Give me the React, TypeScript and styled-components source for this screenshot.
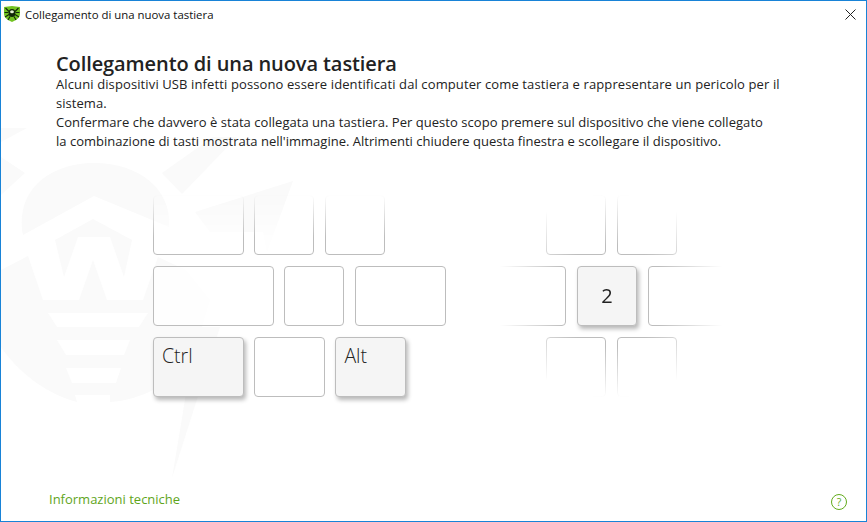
import React from "react";
import styled, { createGlobalStyle } from "styled-components";

const GlobalStyle = createGlobalStyle`
  html, body {
    margin: 0;
    padding: 0;
    background: #fff;
  }
`;

const Watermark = () => (
  <WatermarkSvg viewBox="0 0 867 522" aria-hidden="true">
    <path d="M23 235C15 190 50 163 94 163C140 163 172 190 169 227L94 196Z" />
    <path d="M55 240L93 219L132 240L124 277L110 237L78 237L64 277Z" />
    <path d="M93 260L79 300L107 300Z" />
    <path d="M1 270L28 256L43 300L143 300L158 257L186 270L210 300L195 350C175 385 140 400 110 402L110 395L75 395L77 402C50 395 20 375 1 347ZM48 313L57 327L139 327L148 313ZM57 340L66 355L124 355L130 340ZM66 368L72 383L116 383L121 368Z" fillRule="evenodd" />
    <path d="M1 157L25 173L1 195Z" />
    <path d="M1 128L27 128L1 142Z" />
    <path d="M162 173L213 137L237 137L182 194Z" />
    <path d="M195 212L293 181L267 252L263 232L210 232Z" />
    <path d="M197 327L220 327L172 478Z" />
  </WatermarkSvg>
);

const LogoIcon = () => (
  <svg width="16" height="16" viewBox="0 0 16 16">
    <path d="M0 1L8 0L16 1V8C16 11.5 12 14.5 8 16C4 14.5 0 11.5 0 8Z" fill="#72c322" />
    <g stroke="#12280a" strokeWidth="1.1" fill="none">
      <path d="M1.5 2L5 5.5M14.5 2L11 5.5M0.5 6.5H4.5M15.5 6.5H11.5M1 11L5 8.5M15 11L11 8.5M4 14L6 10.5M12 14L10 10.5" />
    </g>
    <ellipse cx="8" cy="7" rx="3.4" ry="4" fill="#12280a" />
    <ellipse cx="8" cy="5.8" rx="1.9" ry="1.5" fill="#e6f4d4" />
  </svg>
);

const Key = ({ width, pressed, label, center }: KeyProps) => (
  <KeyCap $width={width} $pressed={pressed} $center={center}>
    {label}
  </KeyCap>
);

const App = () => {
  return (
    <Window>
      <GlobalStyle />
      <Watermark />
      <TitleBar>
        <LogoIcon />
        <WindowTitle>Collegamento di una nuova tastiera</WindowTitle>
        <CloseIcon viewBox="0 0 11 11">
          <path d="M0.5 0.5L10.5 10.5M10.5 0.5L0.5 10.5" />
        </CloseIcon>
      </TitleBar>
      <Content>
        <Heading>Collegamento di una nuova tastiera</Heading>
        <Description>
          <Line $spacing={0.115}>
            Alcuni dispositivi USB infetti possono essere identificati dal computer come tastiera e rappresentare un pericolo per il
          </Line>
          <Line $spacing={0.05}>sistema.</Line>
          <Line $spacing={0.04}>
            Confermare che davvero è stata collegata una tastiera. Per questo scopo premere sul dispositivo che viene collegato
          </Line>
          <Line $spacing={0.01}>
            la combinazione di tasti mostrata nell'immagine. Altrimenti chiudere questa finestra e scollegare il dispositivo.
          </Line>
        </Description>
      </Content>
      <Keyboard>
        <LeftCluster>
          <FadedRow>
            <Key width={91} />
            <Key width={60} />
            <Key width={60} />
          </FadedRow>
          <KeyRow>
            <Key width={121} />
            <Key width={60} />
            <Key width={91} />
          </KeyRow>
          <KeyRow>
            <Key width={91} label="Ctrl" pressed />
            <Key width={70.6} />
            <Key width={70.6} label="Alt" pressed />
          </KeyRow>
        </LeftCluster>
        <RightCluster>
          <ShortRow>
            <Key width={60} />
            <Key width={60} />
          </ShortRow>
          <WideRow>
            <Key width={80} />
            <Key width={60} label="2" pressed center />
            <Key width={88} />
          </WideRow>
          <ShortRow>
            <Key width={60} />
            <Key width={60} />
          </ShortRow>
        </RightCluster>
      </Keyboard>
      <Footer>
        <TechLink>Informazioni tecniche</TechLink>
        <HelpIcon>?</HelpIcon>
      </Footer>
    </Window>
  );
};

interface KeyProps {
  width: number;
  pressed?: boolean;
  label?: string;
  center?: boolean;
}

const Window = styled.div`
  position: relative;
  box-sizing: border-box;
  width: 867px;
  height: 522px;
  border: 1px solid #1883d7;
  background: #fff;
  display: flex;
  flex-direction: column;
  overflow: hidden;
  font-family: "Open Sans", "Noto Sans", sans-serif;
  color: #222;
`;

const WatermarkSvg = styled.svg`
  position: absolute;
  left: -1px;
  top: -1px;
  width: 867px;
  height: 522px;
  fill: #fafafa;
`;

const TitleBar = styled.div`
  position: relative;
  display: flex;
  align-items: center;
  height: 26px;
  padding: 0 10px 0 3px;
  box-sizing: border-box;
`;

const WindowTitle = styled.span`
  margin-left: 5px;
  font-size: 11.4px;
  color: #111;
  flex: 1;
`;

const CloseIcon = styled.svg`
  width: 11px;
  height: 11px;
  stroke: #222;
  stroke-width: 1;
  fill: none;
`;

const Content = styled.div`
  position: relative;
  padding: 26px 0 0 55px;
`;

const Heading = styled.h1`
  margin: 0;
  font-size: 20px;
  line-height: 22px;
  font-weight: 600;
  letter-spacing: -0.09px;
  color: #222;
`;

const Description = styled.div`
  font-size: 13px;
  color: #222;
  white-space: nowrap;
`;

const Line = styled.p<{ $spacing: number }>`
  margin: 0;
  line-height: 19px;
  letter-spacing: ${(props) => props.$spacing}px;
`;

const Keyboard = styled.div`
  position: relative;
  display: flex;
  padding: 44px 0 0 152px;
`;

const LeftCluster = styled.div`
  display: flex;
  flex-direction: column;
  gap: 11px;
  width: 333px;
`;

const RightCluster = styled.div`
  display: flex;
  flex-direction: column;
  gap: 11px;
  mask-image: radial-gradient(ellipse 116px 102px at 125px 101px, #000 50%, transparent 100%);
`;

const KeyRow = styled.div`
  display: flex;
  gap: 10.4px;
`;

const FadedRow = styled(KeyRow)`
  mask-image: linear-gradient(to bottom, transparent 0, #000 70%);
`;

const ShortRow = styled(KeyRow)`
  padding-left: 60px;
  gap: 11px;
`;

const WideRow = styled(KeyRow)`
  gap: 11px;
`;

const KeyCap = styled.div<{ $width: number; $pressed?: boolean; $center?: boolean }>`
  box-sizing: border-box;
  width: ${(props) => props.$width}px;
  height: 60px;
  border: 1px solid #bdbdbd;
  border-radius: 4px;
  background: ${(props) => (props.$pressed ? "#f5f5f5" : "rgba(255, 255, 255, 0.7)")};
  box-shadow: ${(props) => (props.$pressed ? "2px 3px 4px rgba(0, 0, 0, 0.28)" : "none")};
  display: flex;
  align-items: ${(props) => (props.$center ? "center" : "flex-start")};
  justify-content: ${(props) => (props.$center ? "center" : "flex-start")};
  padding: ${(props) => (props.$center ? "0" : "4px 8px")};
  font-size: ${(props) => (props.$center ? "20px" : "19.5px")};
  font-weight: ${(props) => (props.$center ? 400 : 300)};
  line-height: 28px;
  color: #222;
`;

const Footer = styled.div`
  position: relative;
  margin-top: auto;
  display: flex;
  align-items: center;
  justify-content: space-between;
  padding: 0 19px 11px 48px;
`;

const TechLink = styled.span`
  font-size: 13px;
  line-height: 20px;
  color: #5fa51b;
`;

const HelpIcon = styled.span`
  box-sizing: border-box;
  width: 16px;
  height: 16px;
  margin-top: 6px;
  border: 1.5px solid #62ab1c;
  border-radius: 50%;
  display: flex;
  align-items: center;
  justify-content: center;
  font-size: 10.5px;
  color: #62ab1c;
`;

export default App;
